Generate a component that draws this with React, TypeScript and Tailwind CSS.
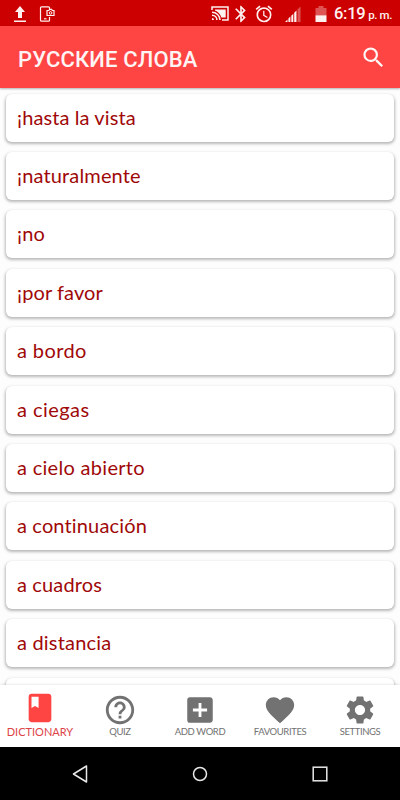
import React from 'react';
import {
  MdAddBox,
  MdAlarm,
  MdBluetooth,
  MdBook,
  MdFavorite,
  MdHelpOutline,
  MdSearch,
  MdSettings,
} from 'react-icons/md';
import type { IconType } from 'react-icons';

const words = [
  { text: '¡hasta la vista', tracking: 'tracking-[0.1px]' },
  { text: '¡naturalmente', tracking: 'tracking-[0.15px]' },
  { text: '¡no', tracking: 'tracking-[0.2px]' },
  { text: '¡por favor', tracking: 'tracking-[0.1px]' },
  { text: 'a bordo', tracking: 'tracking-[0.4px]' },
  { text: 'a ciegas', tracking: 'tracking-[0.45px]' },
  { text: 'a cielo abierto', tracking: 'tracking-[0.3px]' },
  { text: 'a continuación', tracking: 'tracking-[0.15px]' },
  { text: 'a cuadros', tracking: 'tracking-[0.15px]' },
  { text: 'a distancia', tracking: 'tracking-[0.2px]' },
];

const tabs: { label: string; icon: IconType; active?: boolean }[] = [
  { label: 'DICTIONARY', icon: MdBook, active: true },
  { label: 'QUIZ', icon: MdHelpOutline },
  { label: 'ADD WORD', icon: MdAddBox },
  { label: 'FAVOURITES', icon: MdFavorite },
  { label: 'SETTINGS', icon: MdSettings },
];

const StatusBar = () => (
  <div className="flex h-[26px] shrink-0 items-center bg-[#cc0000] pt-px pl-[13px] pr-[9px] text-[#fff0f0]">
    <svg width="14" height="18" viewBox="0 0 14 18" fill="currentColor">
      <path d="M7 1l5 6H9v6H5V7H2zM1 15.6h12V17H1z" />
    </svg>
    <svg className="ml-[12px]" width="16" height="16" viewBox="0 0 16 16" fill="none" stroke="currentColor">
      <path d="M10.5 3V1.8a1 1 0 0 0-1-1h-7a1 1 0 0 0-1 1v12.4a1 1 0 0 0 1 1h7a1 1 0 0 0 1-1V11" strokeWidth="1.2" />
      <path d="M5 12.8h2.5" strokeWidth="1.2" />
      <path d="M8 4.5h1.8l.8-1.2h2l.8 1.2h1.6v5H8z" strokeWidth="1.2" />
      <circle cx="11.6" cy="6.9" r="1.3" />
    </svg>
    <div className="flex-1" />
    <svg width="18" height="15" viewBox="0 0 18 15" fill="none" stroke="currentColor" strokeWidth="1.5">
      <path d="M1 4V1h16v13h-6" />
      <path d="M1 6.2A8 8 0 0 1 9 14M1 9.2A4.9 4.9 0 0 1 5.9 14" />
      <path d="M1 12v2h2a2 2 0 0 0-2-2z" fill="currentColor" stroke="none" />
      <path d="M4 3.5h10.7v8h-4.3C9.2 7.8 6.8 5.6 4 4.5z" fill="currentColor" stroke="none" />
    </svg>
    <MdBluetooth className="ml-[2px]" size={20} />
    <MdAlarm className="ml-[3px]" size={20} />
    <svg className="ml-[11px]" width="16" height="16" viewBox="0 0 16 16" fill="currentColor">
      <path d="M0 16l2.5-2.5V16zM3.4 12.6l2-2V16h-2zM6.3 9.7l2-2V16h-2zM9.2 6.8l2.3-2.3V16H9.2z" />
      <path d="M12.5 3.5L15.5.5V16h-3z" opacity="0.35" />
    </svg>
    <svg className="ml-[14px]" width="12" height="16" viewBox="0 0 12 16" fill="currentColor">
      <path d="M3.5 0h5v2h3v7.5H.5V2h3z" opacity="0.35" />
      <path d="M.5 9.3h11V16H.5z" />
    </svg>
    <div className="ml-[7px] w-[57px] whitespace-nowrap pt-[2px] font-['Roboto',sans-serif] font-medium leading-none">
      <span className="text-[16.5px] tracking-[-0.3px]">6:19</span>
      <span className="ml-[3px] text-[11.5px] tracking-[-0.4px]">p. m.</span>
    </div>
  </div>
);

const Header = () => (
  <header className="relative z-10 flex h-[62px] shrink-0 items-center justify-between bg-[#ff4444] pl-[18px] pr-[13px] text-[#fff4f4] shadow-[0_1px_2px_rgba(0,0,0,0.3)]">
    <h1 className="pt-[5px] font-['Roboto',sans-serif] text-[22px] font-medium leading-none tracking-[0.15px]">
      РУССКИЕ СЛОВА
    </h1>
    <MdSearch size={27} />
  </header>
);

const cardClass =
  'flex h-[48px] shrink-0 items-center rounded-[6px] bg-white px-[11px] pb-[2px] shadow-[0_1.5px_3px_0.5px_rgba(0,0,0,0.27)]';

const WordList = () => (
  <main className="flex min-h-0 flex-1 flex-col gap-[10.4px] overflow-hidden bg-[#fdfdfd] px-[6px] pt-[5.7px]">
    {words.map((word) => (
      <div key={word.text} className={cardClass}>
        <span className={`font-['Lato',sans-serif] text-[20px] leading-6 text-[#a00808] ${word.tracking}`}>
          {word.text}
        </span>
      </div>
    ))}
    {/* Top edge of the next card, scrolled under the tab bar */}
    <div className={cardClass} />
  </main>
);

const TabBar = () => (
  <nav className="relative z-10 grid h-[62px] shrink-0 grid-cols-5 bg-white shadow-[0_-1px_2px_rgba(0,0,0,0.08)]">
    {tabs.map(({ label, icon: Icon, active }) => (
      <div
        key={label}
        className={`flex flex-col items-center font-['Lato',sans-serif] ${
          active ? 'pt-[6px] text-[#ff4444]' : 'pt-[8px] text-[#727272]'
        }`}
      >
        <Icon size={34} />
        <span
          className={`whitespace-nowrap leading-3 ${
            active ? 'mt-px text-[11px] text-[#dc4448]' : '-mt-px text-[9.5px] tracking-[-0.4px]'
          }`}
        >
          {label}
        </span>
      </div>
    ))}
  </nav>
);

const SystemNav = () => (
  <div className="flex h-[53px] shrink-0 items-center justify-between bg-black px-[72px] text-[#e8e8e8]">
    <svg width="16" height="18" viewBox="0 0 16 18" fill="none" stroke="currentColor" strokeWidth="1.5" strokeLinejoin="round">
      <path d="M1.5 9l13-8v16z" />
    </svg>
    <svg width="16" height="16" viewBox="0 0 16 16" fill="none" stroke="currentColor" strokeWidth="1.5">
      <circle cx="8" cy="8" r="6.5" />
    </svg>
    <svg width="16" height="16" viewBox="0 0 16 16" fill="none" stroke="currentColor" strokeWidth="1.5">
      <rect x="1.2" y="1.2" width="13.6" height="13.6" />
    </svg>
  </div>
);

export default function App() {
  return (
    <div className="flex h-[800px] w-[400px] flex-col overflow-hidden bg-white">
      <StatusBar />
      <Header />
      <WordList />
      <TabBar />
      <SystemNav />
    </div>
  );
}
